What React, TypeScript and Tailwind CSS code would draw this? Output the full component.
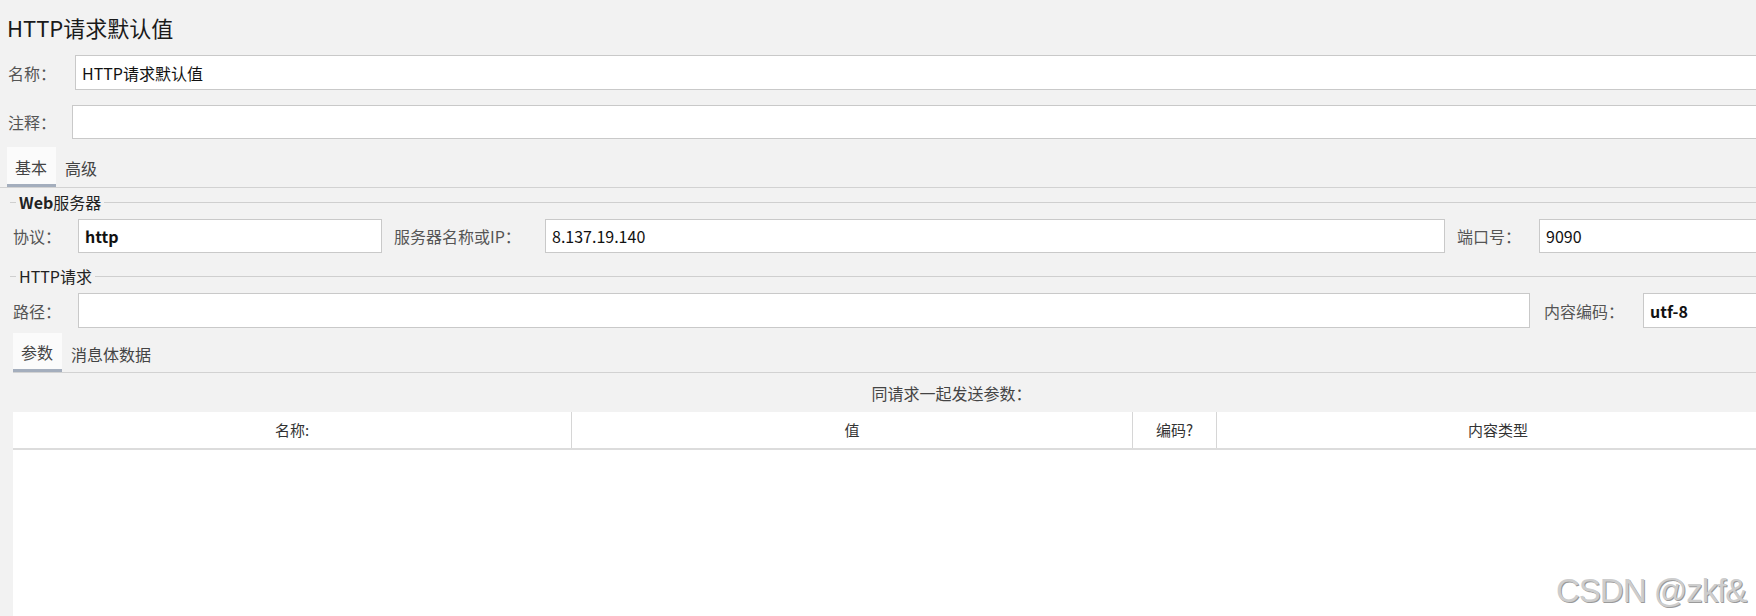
const font = "font-['Noto_Sans_CJK_SC',_'Liberation_Sans',_sans-serif]"

function Field({ value, className = "", bold = false }: { value?: string; className?: string; bold?: boolean }) {
  return (
    <div
      className={`flex h-full items-center border border-[#c9c9c9] bg-white pl-[6px] text-[16px] text-[#111] ${bold ? "font-semibold" : ""} ${className}`}
    >
      {value}
    </div>
  )
}

function Legend({ title, bold }: { title: string; bold?: string }) {
  return (
    <div className="flex h-[28px] items-center">
      <div className="h-px w-[6px] bg-[#cfcfcf]" />
      <span className="px-[3px] text-[16px] leading-none text-[#222]">
        {bold && <b className="font-semibold">{bold}</b>}
        {title}
      </span>
      <div className="h-px flex-1 bg-[#cfcfcf]" />
    </div>
  )
}

function Tabs({ items, className = "" }: { items: string[]; className?: string }) {
  return (
    <div className={`flex h-[40px] border-b border-[#d2d2d2] ${className}`}>
      {items.map((t, i) =>
        i === 0 ? (
          <div
            key={t}
            className="flex w-[49px] items-center border-b-[3px] border-[#a4aebd] bg-[#fbfbfb] pl-[8px] pt-[2px] text-[16px] text-[#444]"
          >
            {t}
          </div>
        ) : (
          <div key={t} className="flex items-center pl-[9px] pt-[2px] text-[16px] text-[#444]">
            {t}
          </div>
        )
      )}
    </div>
  )
}

export default function App() {
  const cols = [
    { label: "名称:", w: "w-[559px]" },
    { label: "值", w: "w-[561px]" },
    { label: "编码?", w: "w-[84px]" },
    { label: "内容类型", w: "w-[562px]" },
  ]

  return (
    <div className={`relative h-[616px] w-[1756px] overflow-hidden bg-[#f2f2f2] ${font}`}>
      <div className="flex h-full w-[1890px] flex-col">
        <div className="h-[55px] pl-[7px] pt-[11px] text-[22px] leading-[32px] text-[#1a1a1a]">HTTP请求默认值</div>

        <div className="flex h-[35px] items-stretch">
          <div className="flex w-[75px] items-center pl-[8px] text-[16px] text-[#555]">名称：</div>
          <Field value="HTTP请求默认值" className="flex-1" />
        </div>

        <div className="mt-[15px] flex h-[34px] items-stretch">
          <div className="flex w-[72px] items-center pl-[8px] text-[16px] text-[#555]">注释：</div>
          <Field className="flex-1" />
        </div>

        <Tabs items={["基本", "高级"]} className="mt-[8px] h-[41px] pl-[7px]" />

        <div className="flex flex-1 flex-col pl-[10px]">
          <Legend bold="Web" title="服务器" />

          <div className="mt-[3px] flex h-[34px] items-stretch text-[16px] text-[#555]">
            <div className="flex w-[68px] items-center pl-[3px]">协议：</div>
            <Field value="http" bold className="w-[304px]" />
            <div className="flex w-[163px] items-center pl-[12px]">服务器名称或IP：</div>
            <Field value="8.137.19.140" className="w-[900px]" />
            <div className="flex w-[94px] items-center pl-[12px]">端口号：</div>
            <Field value="9090" className="flex-1" />
          </div>

          <div className="mt-[9px]">
            <Legend title="HTTP请求" />
          </div>

          <div className="mt-[3px] flex h-[35px] items-stretch text-[16px] text-[#555]">
            <div className="flex w-[68px] items-center pl-[3px]">路径：</div>
            <Field className="w-[1452px]" />
            <div className="flex w-[113px] items-center pl-[14px]">内容编码：</div>
            <Field value="utf-8" bold className="flex-1" />
          </div>

          <Tabs items={["参数", "消息体数据"]} className="ml-[3px] mt-[5px]" />

          <div className="ml-[3px] flex flex-1 flex-col">
            <div className="flex h-[39px] items-center justify-center text-[16px] text-[#444]">同请求一起发送参数：</div>
            <div className="flex w-[1766px] flex-1 flex-col bg-white">
              <div className="flex h-[38px] border-b-2 border-[#dcdcdc]">
                {cols.map((c, i) => (
                  <div
                    key={c.label}
                    className={`flex items-center justify-center text-[15px] text-[#333] ${c.w} ${
                      i < cols.length - 1 ? "border-r border-[#d6d6d6]" : ""
                    }`}
                  >
                    {c.label}
                  </div>
                ))}
              </div>
              <div className="flex-1" />
            </div>
          </div>
        </div>
      </div>

      <div className="absolute left-[1556px] top-[566px] font-['Liberation_Sans',_sans-serif] text-[33px] tracking-[-1px] text-[#cdcdcd] [text-shadow:1px_1px_0_#9a9a9a]">
        CSDN @zkf&amp;
      </div>
    </div>
  )
}
